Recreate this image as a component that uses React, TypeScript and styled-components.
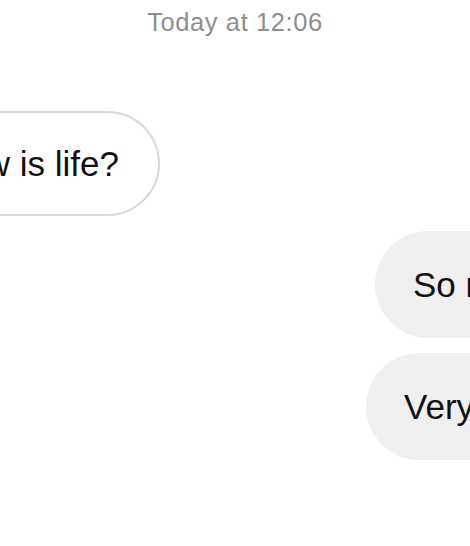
import React from "react";
import styled, { createGlobalStyle } from "styled-components";

const Global = createGlobalStyle`
  html, body { margin: 0; padding: 0; background: #ffffff; }
  body { font-family: "Liberation Sans", Arial, sans-serif; }
`;

const Viewport = styled.div`
  width: 470px;
  height: 546px;
  overflow: hidden;
  background: #ffffff;
  display: flex;
  flex-direction: column;
`;

const Timestamp = styled.div`
  margin-top: 6px;
  text-align: center;
  font-size: 25.5px;
  line-height: 32px;
  color: #8e8e8e;
  letter-spacing: 0.6px;
`;

const Thread = styled.div`
  margin-top: 73px;
  display: flex;
  flex-direction: column;
  gap: 15px;
`;

const Row = styled.div<{ $indent: number }>`
  display: flex;
  margin-left: ${(p) => p.$indent}px;
  white-space: nowrap;
`;

const Bubble = styled.div<{ $mine?: boolean }>`
  flex: none;
  box-sizing: border-box;
  height: ${(p) => (p.$mine ? 107 : 105)}px;
  display: flex;
  align-items: center;
  padding: 0 ${(p) => (p.$mine ? 38 : 39)}px;
  border-radius: 54px;
  font-size: 35px;
  color: #111111;
  background: ${(p) => (p.$mine ? "#efefef" : "#ffffff")};
  border: ${(p) => (p.$mine ? "none" : "2px solid #d8d8d8")};
`;

export default function App() {
  return (
    <>
      <Global />
      <Viewport>
        <Timestamp>Today at 12:06</Timestamp>
        <Thread>
          <Row $indent={-101}>
            <Bubble>How is life?</Bubble>
          </Row>
          <Row $indent={375}>
            <Bubble $mine>So much</Bubble>
          </Row>
          <Row $indent={366}>
            <Bubble $mine>Very good</Bubble>
          </Row>
        </Thread>
      </Viewport>
    </>
  );
}
